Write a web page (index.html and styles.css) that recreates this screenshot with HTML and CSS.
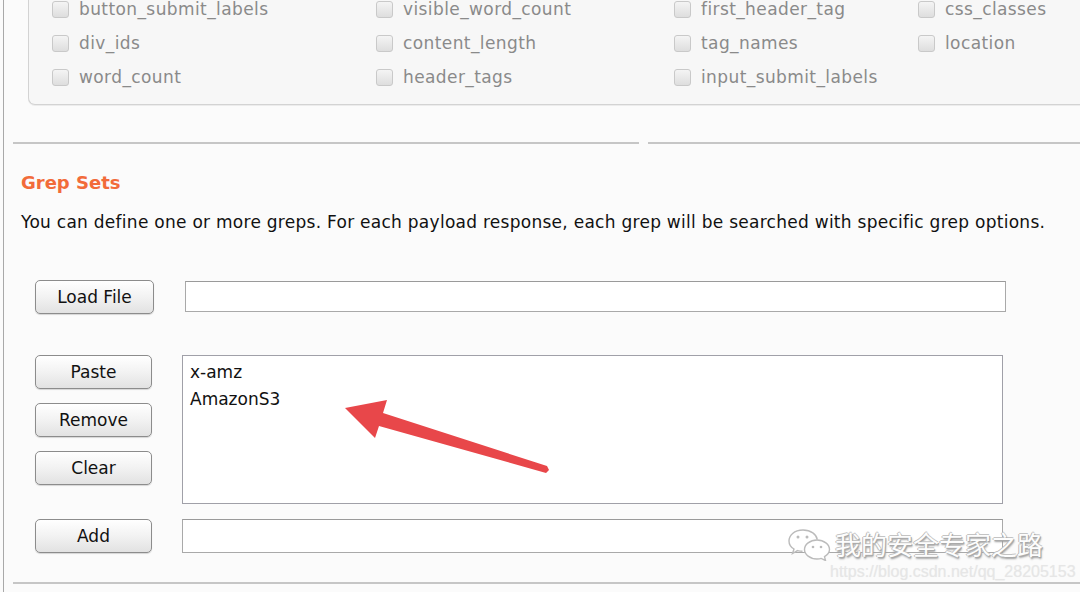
FILE: index.html
```html
<!DOCTYPE html>
<html lang="en">
<head>
    <meta charset="UTF-8">
    <meta name="viewport" content="width=device-width, initial-scale=1.0">
    <title>Grep Sets</title>
    <link rel="stylesheet" href="styles.css">
</head>
<body>
    <div class="frame">
        <!-- Response options (scrolled, only the bottom part is visible) -->
        <div class="options">
            <label class="check"><span class="box"></span>button_submit_labels</label>
            <label class="check"><span class="box"></span>visible_word_count</label>
            <label class="check"><span class="box"></span>first_header_tag</label>
            <label class="check"><span class="box"></span>css_classes</label>

            <label class="check"><span class="box"></span>div_ids</label>
            <label class="check"><span class="box"></span>content_length</label>
            <label class="check"><span class="box"></span>tag_names</label>
            <label class="check"><span class="box"></span>location</label>

            <label class="check"><span class="box"></span>word_count</label>
            <label class="check"><span class="box"></span>header_tags</label>
            <label class="check"><span class="box"></span>input_submit_labels</label>
        </div>

        <div class="separator">
            <span class="sep-left"></span>
            <span class="sep-right"></span>
        </div>

        <h2 class="title">Grep Sets</h2>
        <p class="desc">You can define one or more greps. For each payload response, each grep will be searched with specific grep options.</p>

        <div class="row row-load">
            <div class="buttons">
                <button type="button" class="btn btn-load">Load File</button>
            </div>
            <div class="field field-load"></div>
        </div>

        <div class="row row-list">
            <div class="buttons">
                <button type="button" class="btn">Paste</button>
                <button type="button" class="btn">Remove</button>
                <button type="button" class="btn">Clear</button>
            </div>
            <div class="list">
                <div>x-amz</div>
                <div>AmazonS3</div>
            </div>
        </div>

        <div class="row row-add">
            <div class="buttons">
                <button type="button" class="btn">Add</button>
            </div>
            <div class="field field-add"></div>
        </div>

        <div class="bottom-line"></div>

        <!-- red annotation arrow -->
        <svg class="arrow" width="220" height="80" viewBox="340 396 220 80">
            <polygon points="345,408 387,400 383,413 547,466 549,470 546,473 379,426 375,438" fill="#e8474a"/>
        </svg>

        <!-- watermark -->
        <div class="watermark">
            <svg class="wm-icon" width="46" height="34" viewBox="0 0 46 34">
                <path d="M16 3 C7 3 2 8.5 2 14 C2 17.5 4 20.3 7 22 L5.5 26.5 L10.5 23.6 C12 24 13.6 24.3 15.5 24.3" fill="none" stroke="#bbb" stroke-width="1.4"/>
                <path d="M16 3 C24 3 29.5 7.5 30.3 12.6" fill="none" stroke="#bbb" stroke-width="1.4"/>
                <circle cx="11" cy="10" r="1.5" fill="#bbb"/>
                <circle cx="20" cy="10" r="1.5" fill="#bbb"/>
                <path d="M30 13 C23 13 17.5 17.5 17.5 22.5 C17.5 27.5 23 32 30 32 C31.5 32 33 31.8 34.2 31.4 L38.5 33.5 L37.5 29.6 C40.5 27.8 42.5 25.3 42.5 22.5 C42.5 17.5 37 13 30 13 Z" fill="#fff" stroke="#bbb" stroke-width="1.4"/>
                <circle cx="26" cy="20" r="1.3" fill="#bbb"/>
                <circle cx="34" cy="20" r="1.3" fill="#bbb"/>
            </svg>
            <span class="wm-text">我的安全专家之路</span>
        </div>
        <div class="wm-url">https://blog.csdn.net/qq_28205153</div>
    </div>
</body>
</html>
```

FILE: styles.css
```css
html, body {
    margin: 0;
    padding: 0;
    height: 100%;
    overflow: hidden;
}

body {
    font-family: "DejaVu Sans", "Noto Sans", sans-serif;
    background-color: #fbfbfb;
    color: #111;
}

.frame {
    position: relative;
    display: flow-root;
    margin-left: 3px;
    height: 592px;
    border-left: 1px solid #a9a9a9;
}

/* options panel */
.options {
    display: grid;
    grid-template-columns: 324px 298px 244px 1fr;
    grid-auto-rows: 34px;
    margin-top: -8px;
    margin-left: 24px;
    padding: 0 0 10px 23px;
    background-color: #f7f7f7;
    border: 1px solid #d3d3d3;
    border-top: none;
    border-right: none;
    border-bottom-left-radius: 7px;
    box-shadow: 0 1px 0 #ececec;
}

.check {
    display: flex;
    align-items: center;
    gap: 10px;
    font-size: 17px;
    letter-spacing: 0.4px;
    color: #8a8a8a;
    white-space: nowrap;
}

.box {
    width: 17px;
    height: 17px;
    box-sizing: border-box;
    border: 1px solid #c9c9c9;
    border-radius: 3px;
    background: linear-gradient(#f4f4f4, #dedede);
}

/* separators */
.separator {
    display: flex;
    gap: 9px;
    margin: 37px 0 0 9px;
}

.sep-left,
.sep-right {
    height: 2px;
    background-color: #c6c6c6;
}

.sep-left {
    width: 626px;
}

.sep-right {
    flex: 1;
}

.title {
    margin: 28px 0 0 17px;
    font-size: 18px;
    line-height: 22px;
    font-weight: bold;
    color: #f26b3a;
}

.desc {
    margin: 17px 0 0 17px;
    font-size: 17px;
    letter-spacing: 0.27px;
    line-height: 22px;
    color: #111;
    white-space: nowrap;
}

/* rows */
.row {
    display: flex;
    align-items: flex-start;
}

.row-load {
    margin-top: 47px;
}

.row-list {
    margin-top: 41px;
}

.row-add {
    margin-top: 15px;
}

.buttons {
    display: flex;
    flex-direction: column;
    gap: 14px;
    width: 147px;
    padding-left: 31px;
    flex-shrink: 0;
}

.btn {
    width: 117px;
    height: 34px;
    padding: 0;
    font-family: "DejaVu Sans", sans-serif;
    font-size: 17px;
    color: #111;
    border: 1px solid #8c8c8c;
    border-radius: 5px;
    background: linear-gradient(#ffffff, #f2f2f2 50%, #e2e2e2);
    box-shadow: 0 1px 1px rgba(0, 0, 0, 0.15);
}

.btn-load {
    width: 119px;
}

.field {
    height: 31px;
    box-sizing: border-box;
    background-color: #fff;
    border: 1px solid #a9a9a9;
    border-top-color: #9a9a9a;
}

.field-load {
    width: 821px;
    margin-left: 3px;
    margin-top: 1px;
}

.field-add {
    width: 821px;
    height: 34px;
}

.list {
    width: 821px;
    height: 149px;
    box-sizing: border-box;
    padding: 3px 7px;
    background-color: #fff;
    border: 1px solid #a0a0a8;
    font-size: 17px;
    line-height: 27px;
    color: #111;
}

.bottom-line {
    height: 2px;
    margin: 29px 0 0 9px;
    background-color: #c6c6c6;
}

/* overlays */
.arrow {
    position: absolute;
    left: 336px;
    top: 396px;
}

.watermark {
    position: absolute;
    left: 783px;
    top: 527px;
    display: flex;
    align-items: center;
    gap: 2px;
}

.wm-text {
    font-family: "Noto Sans CJK SC", sans-serif;
    font-size: 26px;
    line-height: 34px;
    color: #fdfdfd;
    text-shadow: 1px 1px 0 #aaa, -1px 0 0 #bbb, 0 -1px 0 #c4c4c4, 1px 2px 2px #999;
}

.wm-url {
    position: absolute;
    left: 826px;
    top: 563px;
    font-family: "Liberation Sans", sans-serif;
    font-size: 16px;
    color: #e6e6e6;
    text-shadow: 0 0 1px #eee;
}
```
